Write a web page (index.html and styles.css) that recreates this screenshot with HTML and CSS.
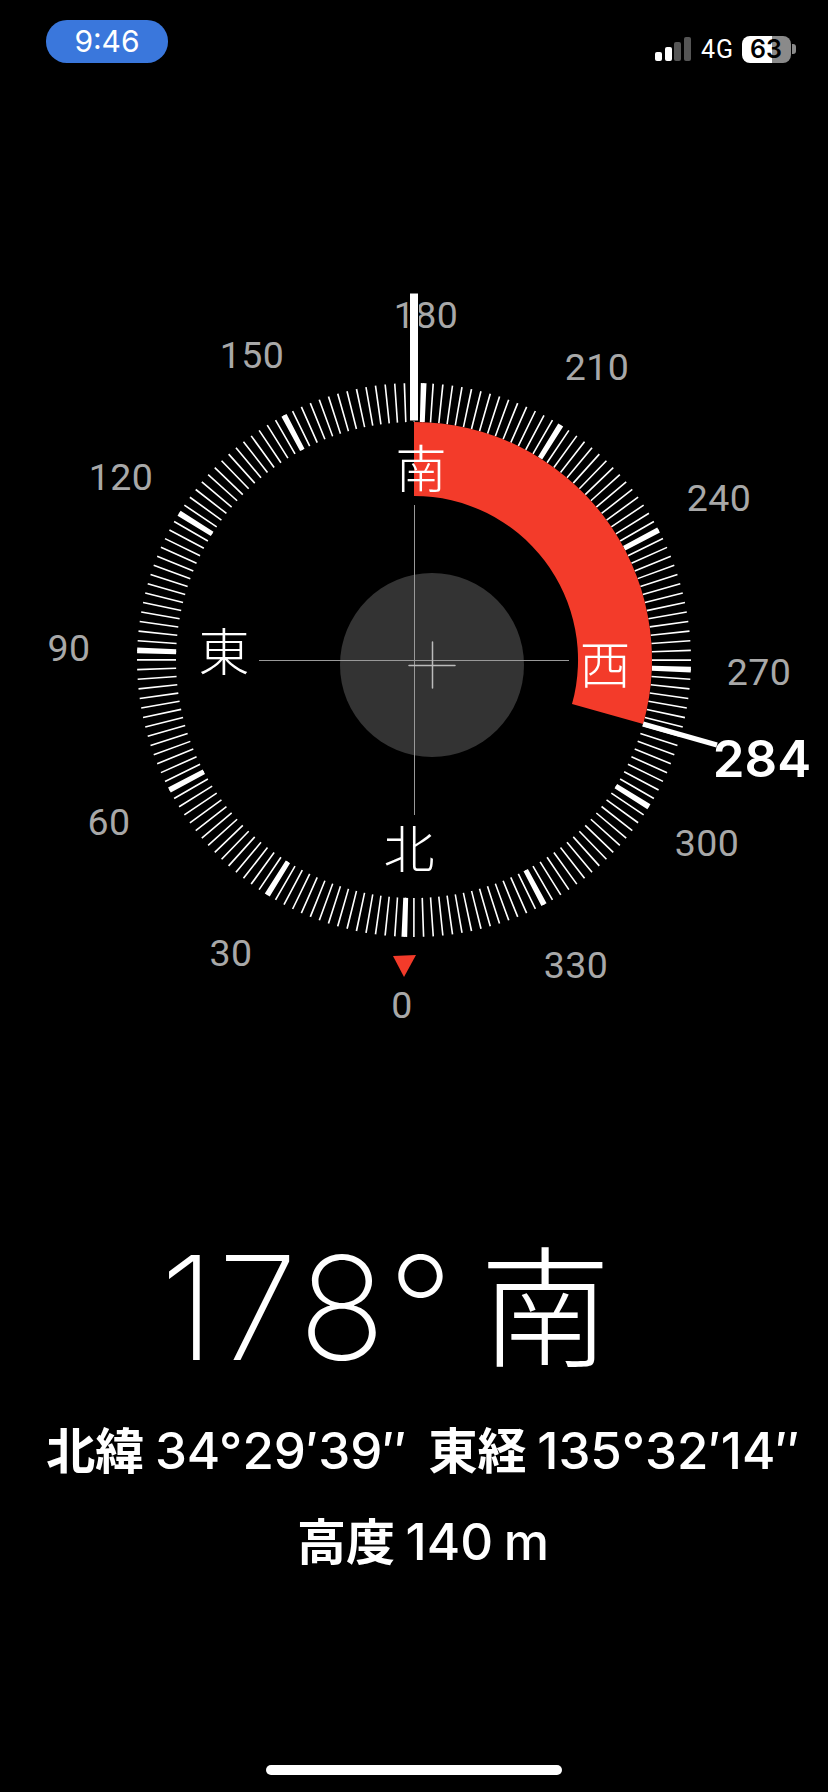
FILE: index.html
```html
<!DOCTYPE html>
<html lang="ja">
  <head>
    <meta charset="UTF-8" />
    <meta name="viewport" content="width=device-width, initial-scale=1.0" />
    <title>コンパス</title>
    <link rel="stylesheet" href="styles.css">
  </head>
  <body>
    <header class="status-bar">
      <div class="time-pill">9:46</div>
      <div class="status-icons">
        <div class="signal">
          <span class="signal-bar bar-1"></span>
          <span class="signal-bar bar-2"></span>
          <span class="signal-bar bar-3 off"></span>
          <span class="signal-bar bar-4 off"></span>
        </div>
        <span class="network">4G</span>
        <div class="battery"><span class="battery-level">63</span></div>
        <span class="battery-nub"></span>
      </div>
    </header>

    <svg class="dial" viewBox="0 80 828 1000" aria-label="compass">
      <g transform="translate(414 660)">
        <!-- tick rings: pathLength 360 means dash values are in degrees -->
        <circle class="ticks" r="257.5" pathLength="360" transform="rotate(2)" />
        <circle class="ticks-major" r="257.5" pathLength="360" transform="rotate(2)" />

        <g class="degrees">
          <text x="-12" y="345">0</text>
          <text x="-183" y="293">30</text>
          <text x="-305" y="162">60</text>
          <text x="-345" y="-12">90</text>
          <text x="-293" y="-183">120</text>
          <text x="-162" y="-305">150</text>
          <text x="12" y="-345">180</text>
          <text x="183" y="-293">210</text>
          <text x="305" y="-162">240</text>
          <text x="345" y="12">270</text>
          <text x="293" y="183">300</text>
          <text x="162" y="305">330</text>
        </g>

        <path class="sweep" d="M0 -238 A238 238 0 0 1 229.2 64 L158 44.1 A164 164 0 0 0 0 -164 Z" />
        <polygon class="north" points="-21,296 2,295 -10,317" />

        <circle class="level-disc" cx="18" cy="5" r="92" />
        <path class="crosshair" d="M0.5 -155 V155 M-155 0.5 H155" />
        <path class="level-cross" d="M18.5 -18 V28 M-5 5.5 H41" />

        <g class="cardinals">
          <text x="7" y="-194">南</text>
          <text x="191" y="2">西</text>
          <text x="-5" y="186">北</text>
          <text x="-190" y="-11">東</text>
        </g>

        <rect class="heading" x="-4.5" y="-367" width="9" height="128" />
        <line class="target" x1="229" y1="64" x2="303" y2="85" />
        <text class="target-label" x="348" y="98">284</text>
      </g>
    </svg>

    <main class="readout">
      <div class="heading-text"><span class="heading-deg">178°</span><span class="heading-dir">南</span></div>
      <div class="coords">
        <span><span class="kanji">北緯</span> 34°29′39″</span>
        <span><span class="kanji">東経</span> 135°32′14″</span>
      </div>
      <div class="altitude"><span class="kanji">高度</span> 140 m</div>
    </main>

    <div class="home-indicator"></div>
  </body>
</html>
```

FILE: styles.css
```css
* {
  box-sizing: border-box;
  margin: 0;
  padding: 0;
}

body {
  width: 828px;
  height: 1792px;
  background-color: #000;
  color: #fff;
  display: flex;
  flex-direction: column;
  overflow: hidden;
  font-family: Inter, "Noto Sans CJK JP", sans-serif;
}

/* status bar */
.status-bar {
  height: 80px;
  flex: none;
  display: flex;
  justify-content: space-between;
  align-items: flex-start;
  padding: 20px 32px 0 46px;
}

.time-pill {
  width: 122px;
  height: 43px;
  border-radius: 21px;
  background-color: #3a77dc;
  font-size: 30px;
  line-height: 43px;
  text-align: center;
}

.status-icons {
  display: flex;
  align-items: flex-end;
  height: 43px;
}

.signal {
  display: flex;
  align-items: flex-end;
  gap: 2.5px;
  height: 24px;
  margin-right: 10px;
  margin-bottom: 2px;
}

.signal-bar {
  width: 7px;
  border-radius: 2px;
  background-color: #fff;
}

.signal-bar.off {
  background-color: #555;
}

.bar-1 { height: 9px; }
.bar-2 { height: 14px; }
.bar-3 { height: 19px; }
.bar-4 { height: 24px; }

.network {
  font-family: Roboto, sans-serif;
  font-size: 25px;
  letter-spacing: 1px;
  line-height: 26px;
  margin-right: 8px;
}

.battery {
  width: 49px;
  height: 27px;
  border-radius: 8px;
  background: linear-gradient(to right, #fff 61%, #8a8a8a 61%);
  color: #000;
  font-size: 25px;
  font-weight: 600;
  line-height: 27px;
  padding-left: 8px;
}

.battery-nub {
  width: 4px;
  height: 10px;
  margin: 0 0 9px 1px;
  border-radius: 0 3px 3px 0;
  background-color: #8a8a8a;
}

/* dial */
.dial {
  display: block;
  width: 828px;
  height: 1000px;
  flex: none;
}

.dial text {
  text-anchor: middle;
  dominant-baseline: central;
}

.ticks,
.ticks-major {
  fill: none;
  stroke: #fff;
  stroke-width: 39;
}

.ticks {
  stroke-dasharray: 0.36 1.64;
  stroke-dashoffset: 0.18;
}

.ticks-major {
  stroke-dasharray: 1.2 28.8;
  stroke-dashoffset: 0.6;
}

.degrees {
  fill: #a8a8a8;
  font-family: Roboto, sans-serif;
  font-size: 37.5px;
  letter-spacing: 0.4px;
}

.sweep {
  fill: #f33b2a;
}

.north {
  fill: #f33b2a;
}

.level-disc {
  fill: #333;
}

.crosshair {
  fill: none;
  stroke: #999;
  stroke-width: 1;
}

.level-cross {
  fill: none;
  stroke: #bbb;
  stroke-width: 1.5;
  stroke-linecap: round;
}

.cardinals {
  fill: #fff;
  font-family: "Noto Sans CJK JP", sans-serif;
  font-size: 51px;
  font-weight: 300;
}

.heading {
  fill: #fff;
  stroke: #000;
  stroke-width: 1;
}

.target {
  stroke: #fff;
  stroke-width: 5;
}

.target-label {
  fill: #fff;
  font-size: 51px;
  font-weight: 600;
}

/* readout */
.readout {
  display: flex;
  flex-direction: column;
  align-items: center;
}

.heading-text {
  align-self: flex-start;
  display: flex;
  align-items: center;
  gap: 24px;
  margin: 163px 0 0 160px;
  height: 130px;
}

.heading-deg {
  font-size: 144px;
  font-weight: 200;
  letter-spacing: 3px;
  line-height: 130px;
}

.heading-dir {
  font-family: "Noto Sans CJK JP", sans-serif;
  font-size: 130px;
  font-weight: 200;
  line-height: 130px;
  margin-bottom: 18px;
}

.coords {
  display: flex;
  gap: 22px;
  margin: 45px 0 0 18px;
  font-size: 51px;
  font-weight: 500;
  line-height: 60px;
  white-space: nowrap;
  word-spacing: -3px;
}

.altitude {
  margin: 28px 0 0 18px;
  font-size: 51px;
  font-weight: 500;
  line-height: 60px;
  word-spacing: -3px;
}

.kanji {
  font-family: "Noto Sans CJK JP", sans-serif;
  font-size: 49px;
  font-weight: 700;
}

.home-indicator {
  width: 296px;
  height: 10px;
  margin: auto auto 17px;
  border-radius: 5px;
  background-color: #fff;
}
```
